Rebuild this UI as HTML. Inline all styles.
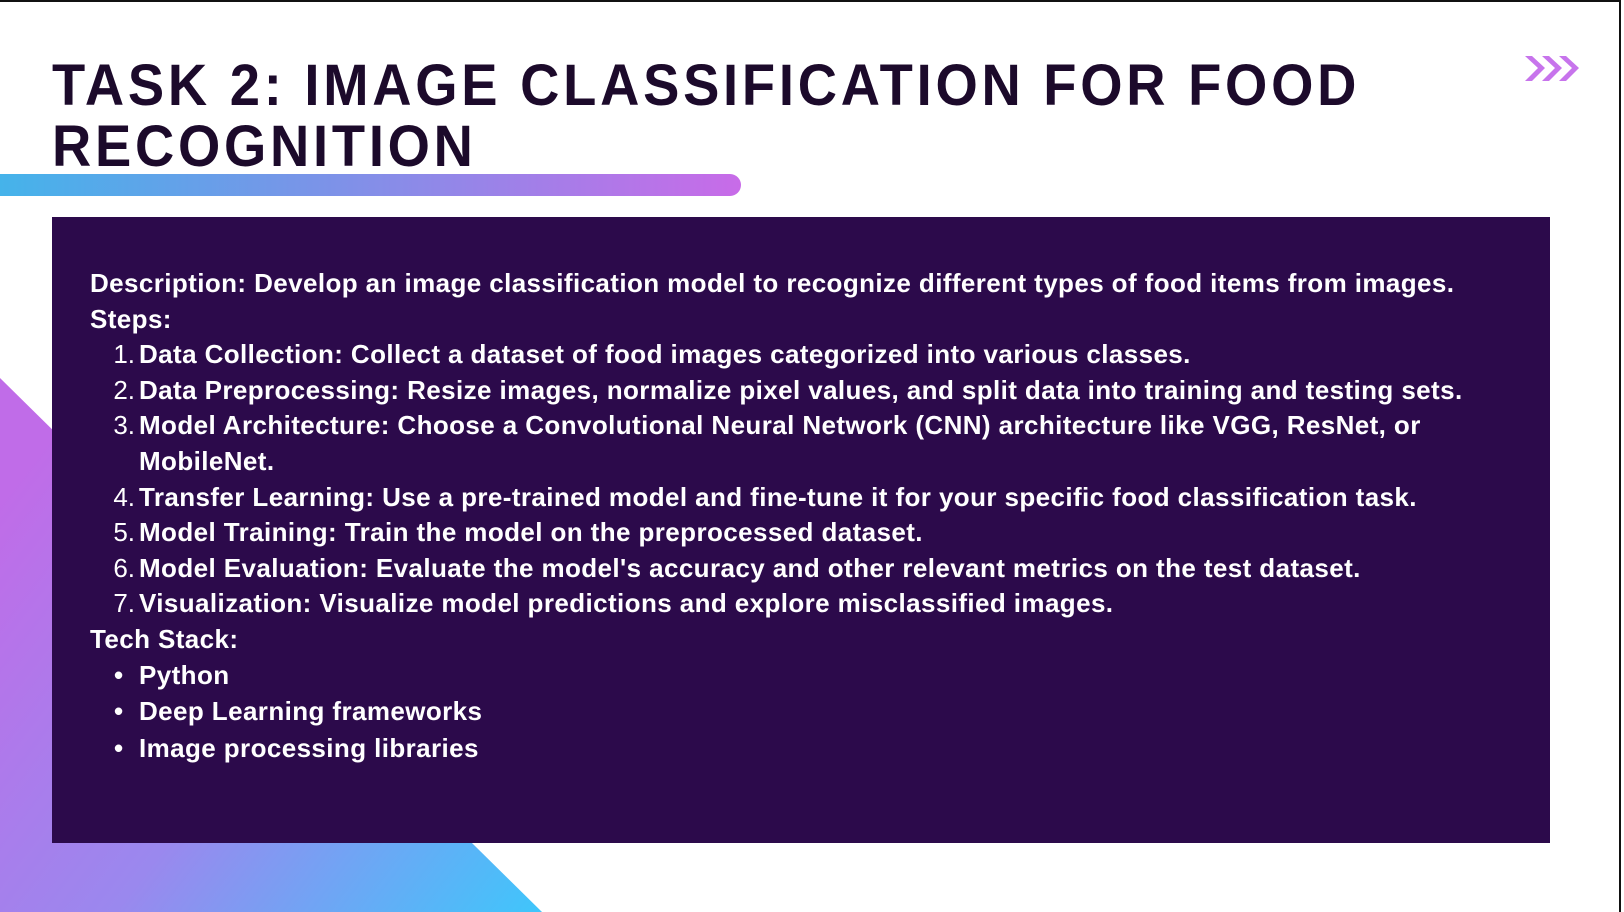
<!DOCTYPE html>
<html><head><meta charset="utf-8"><style>
html,body{margin:0;padding:0}
body{width:1624px;height:912px;position:relative;overflow:hidden;background:#fff;font-family:"Liberation Sans",Arial,sans-serif}
.frame{position:absolute;left:0;top:0;width:1621px;height:912px;border-top:2px solid #111;border-right:2px solid #111;box-sizing:border-box}
.t{position:absolute;left:52px;font-weight:bold;font-size:58px;color:#1c0a2b;letter-spacing:4px;white-space:nowrap;transform-origin:0 0;line-height:1}
.bar{position:absolute;left:0;top:174px;width:741px;height:22px;border-radius:0 11px 11px 0;background:linear-gradient(90deg,#45b3ea,#7d92e8 45%,#c86be8)}
.panel{position:absolute;left:52px;top:217px;width:1498px;height:626px;background:#2c0a4b}
.txt{position:absolute;left:90px;top:266px;color:#fff;font-weight:bold;font-size:26px;line-height:35.6px;white-space:nowrap;letter-spacing:0.4px}
.txt div{height:35.6px}
.n{display:inline-block;width:49px;text-align:right;padding-right:4px;box-sizing:border-box;font-weight:normal;letter-spacing:0}
.ind{padding-left:49px}
.b{display:inline-block;width:49px;padding-left:24px;box-sizing:border-box}
.bl div{height:36.6px}
</style></head><body>
<svg style="position:absolute;left:0;top:0" width="1624" height="912">
<defs>
<linearGradient id="g2" x1="0" y1="500" x2="542" y2="912" gradientUnits="userSpaceOnUse">
<stop offset="0" stop-color="#c06ce8"/><stop offset="0.5" stop-color="#9a88ee"/><stop offset="1" stop-color="#3fc6fb"/></linearGradient></defs>
<polygon points="0,378 542,912 0,912" fill="url(#g2)"/>
<g fill="#c774ec">
<polygon points="1525,56 1532,56 1545,68 1532,81 1525,81 1538,68"/>
<polygon points="1542,56 1549,56 1562,68 1549,81 1542,81 1555,68"/>
<polygon points="1559,56 1566,56 1579,68 1566,81 1559,81 1572,68"/>
</g>
</svg>
<div class="frame"></div>
<div class="t" style="top:57px;transform:scaleX(0.937)">TASK 2: IMAGE CLASSIFICATION FOR FOOD</div>
<div class="t" style="top:118px;transform:scaleX(0.937)">RECOGNITION</div>
<div class="bar"></div>
<div class="panel"></div>
<div class="txt">
<div>Description: Develop an image classification model to recognize different types of food items from images.</div>
<div>Steps:</div>
<div><span class="n">1.</span>Data Collection: Collect a dataset of food images categorized into various classes.</div>
<div><span class="n">2.</span>Data Preprocessing: Resize images, normalize pixel values, and split data into training and testing sets.</div>
<div><span class="n">3.</span>Model Architecture: Choose a Convolutional Neural Network (CNN) architecture like VGG, ResNet, or</div>
<div class="ind">MobileNet.</div>
<div><span class="n">4.</span>Transfer Learning: Use a pre-trained model and fine-tune it for your specific food classification task.</div>
<div><span class="n">5.</span>Model Training: Train the model on the preprocessed dataset.</div>
<div><span class="n">6.</span>Model Evaluation: Evaluate the model's accuracy and other relevant metrics on the test dataset.</div>
<div><span class="n">7.</span>Visualization: Visualize model predictions and explore misclassified images.</div>
<div>Tech Stack:</div>
<div class="bl">
<div><span class="b">•</span>Python</div>
<div><span class="b">•</span>Deep Learning frameworks</div>
<div><span class="b">•</span>Image processing libraries</div>
</div>
</div>
</body></html>
